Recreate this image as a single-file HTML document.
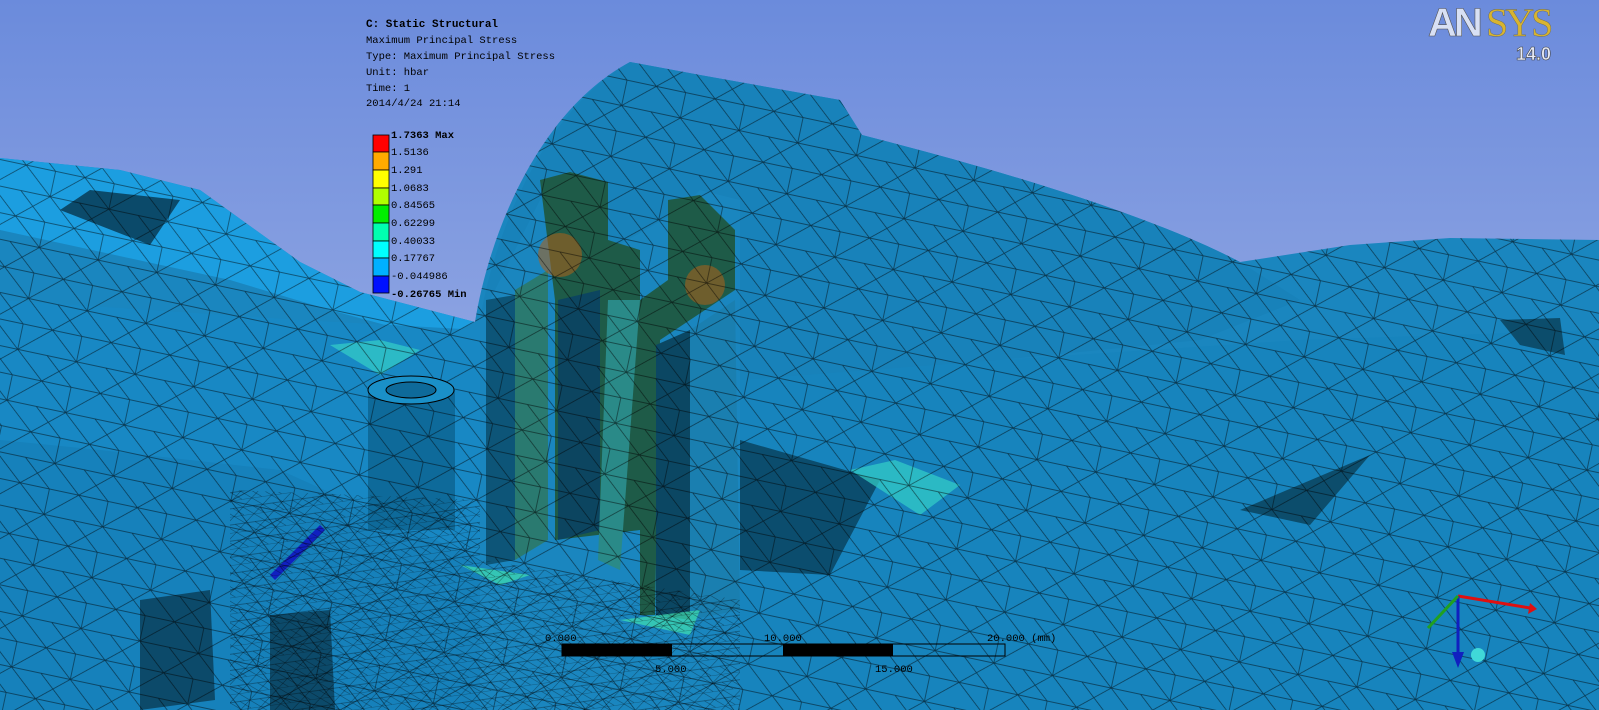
<!DOCTYPE html>
<html><head><meta charset="utf-8"><style>
body{margin:0;width:1599px;height:710px;overflow:hidden;background:#000}
svg{display:block}
.t{font-family:"Liberation Mono",monospace;font-size:10.5px;fill:#000}
</style></head><body>
<svg width="1599" height="710" viewBox="0 0 1599 710" xmlns="http://www.w3.org/2000/svg">
<defs>
<linearGradient id="sky" x1="0" y1="0" x2="0" y2="1">
<stop offset="0" stop-color="#6b8bdc"/><stop offset="1" stop-color="#b0bde8"/></linearGradient>
<pattern id="mesh" width="60" height="52" patternUnits="userSpaceOnUse" patternTransform="rotate(12)">
<path d="M0 0H60M0 26H60M0 52H60M0 0L30 26L0 52M60 0L30 26L60 52M30 0V26M0 26L30 52" stroke="#000" stroke-width="0.7" fill="none" opacity="0.6"/></pattern>
<pattern id="fine" width="20" height="16" patternUnits="userSpaceOnUse" patternTransform="rotate(-8)">
<path d="M0 0H20M0 8H20M0 0L10 8L20 0M0 16L10 8L20 16M0 8L10 16" stroke="#000" stroke-width="0.5" fill="none" opacity="0.6"/></pattern>
<clipPath id="cp"><path d="M0 158L120 170L200 190L300 262L360 292L475 322C490 230 540 110 630 62L700 75L840 100L862 135C1000 170 1150 215 1240 262L1350 245L1450 238L1599 240V710H0Z"/></clipPath>
<clipPath id="floor"><path d="M230 490L480 500L480 560L740 600L740 710H230Z"/></clipPath>
</defs>
<rect width="1599" height="710" fill="url(#sky)"/>
<path d="M0 158L120 170L200 190L300 262L360 292L475 322C490 230 540 110 630 62L700 75L840 100L862 135C1000 170 1150 215 1240 262L1350 245L1450 238L1599 240V710H0Z" fill="#1a86bf"/>
<path d="M0 158L120 170L200 190L300 262L360 292L475 322L440 340L330 310L230 280L0 230Z" fill="#1c9ee0"/>
<path d="M480 320C495 230 545 110 630 62L700 75L840 100L862 135C1000 170 1150 215 1240 262L1300 300L1200 340L1000 360L800 380L740 390L740 200L700 190L680 210L610 250L600 180L570 175L540 200Z" fill="#1882ba"/>
<path d="M0 300L300 320L480 330L480 700H0Z" fill="#1888c4"/>
<path d="M0 440L100 450L280 470L480 560L480 710H0Z" fill="#1681bb"/>
<path d="M60 210L90 190L180 200L150 245Z" fill="#0b4a6a"/>
<path d="M740 380L1000 360L1300 340L1599 330V710H740Z" fill="#1784bd"/>
<path d="M740 440L880 480L830 575L740 570Z" fill="#0b4d6e"/>
<path d="M1240 510L1370 455L1310 525Z" fill="#0c4d6c"/>
<path d="M368 390L455 390L455 530L368 530Z" fill="#0e6a9a"/>
<path d="M486 300L515 295L515 560L486 565Z" fill="#0d5578"/>
<path d="M515 290L548 270L548 540L515 560Z" fill="#2a7a70"/>
<path d="M540 180L570 172L608 182L608 240L640 250L640 530L555 540L555 300Z" fill="#1e5b48"/>
<path d="M558 300L600 290L600 530L558 540Z" fill="#0c4560"/>
<path d="M668 200L700 195L735 230L735 290L660 340L655 615L640 615L640 300L668 280Z" fill="#1e5b48"/>
<path d="M656 345L690 330L690 620L656 615Z" fill="#0b4763"/>
<path d="M690 330L735 300L740 610L690 620Z" fill="#1a7fb0"/>
<path d="M608 300L640 300L620 570L598 560Z" fill="#2a8a88"/>
<circle cx="560" cy="255" r="22" fill="#b06018" opacity="0.55"/>
<circle cx="705" cy="285" r="20" fill="#b06018" opacity="0.55"/>
<path d="M330 345L380 340L420 350L380 375Z" fill="#35d0c8" opacity="0.7"/>
<path d="M850 470L895 460L960 485L920 515Z" fill="#35d0c8" opacity="0.7"/>
<path d="M460 565L530 575L500 585Z" fill="#40e0b0" opacity="0.7"/>
<path d="M620 620L700 610L690 635Z" fill="#40e0b0" opacity="0.7"/>
<path d="M270 575L320 525L325 530L275 580Z" fill="#1020c0"/>
<path d="M140 600L210 590L215 700L140 710Z" fill="#0c4a6a"/>
<path d="M270 615L330 610L335 710L270 710Z" fill="#0c4a6a"/>
<path d="M1500 320L1560 318L1565 355L1520 345Z" fill="#0c4d6c"/>
<rect width="1599" height="710" fill="url(#mesh)" clip-path="url(#cp)"/>
<rect x="230" y="490" width="520" height="220" fill="url(#fine)" clip-path="url(#floor)"/>
<ellipse cx="411" cy="390" rx="43" ry="14" fill="#1a90c8" stroke="#000"/>
<ellipse cx="411" cy="390" rx="25" ry="8" fill="#0e6a9a" stroke="#000"/>
<rect x="562" y="644" width="443" height="12" fill="none" stroke="#000" stroke-width="1"/>
<rect x="562" y="644" width="110" height="12" fill="#000"/>
<rect x="783" y="644" width="110" height="12" fill="#000"/>
<text class="t" x="545" y="641">0.000</text><text class="t" x="764" y="641">10.000</text><text class="t" x="987" y="641">20.000 (mm)</text>
<text class="t" x="655" y="672">5.000</text><text class="t" x="875" y="672">15.000</text>
<line x1="1458" y1="596" x2="1530" y2="608" stroke="#e01010" stroke-width="3"/>
<path d="M1530 603L1537 609L1528 614Z" fill="#e01010"/>
<line x1="1458" y1="596" x2="1458" y2="655" stroke="#1020c0" stroke-width="3"/>
<path d="M1452 652L1458 668L1464 652Z" fill="#1020c0"/>
<line x1="1458" y1="596" x2="1428" y2="628" stroke="#20a020" stroke-width="3"/>
<circle cx="1478" cy="655" r="7" fill="#40d8d8"/>
<text class="t" x="366" y="27" style="font-weight:bold;font-size:11px">C: Static Structural</text>
<text class="t" x="366" y="43">Maximum Principal Stress</text>
<text class="t" x="366" y="59">Type: Maximum Principal Stress</text>
<text class="t" x="366" y="75">Unit: hbar</text>
<text class="t" x="366" y="91">Time: 1</text>
<text class="t" x="366" y="106">2014/4/24 21:14</text>
<g stroke="#000" stroke-width="0.8">
<rect x="373" y="135" width="16" height="17" fill="#ff0000"/>
<rect x="373" y="152" width="16" height="18" fill="#ffaa00"/>
<rect x="373" y="170" width="16" height="18" fill="#ffff00"/>
<rect x="373" y="188" width="16" height="17" fill="#b0ff00"/>
<rect x="373" y="205" width="16" height="18" fill="#00ee00"/>
<rect x="373" y="223" width="16" height="18" fill="#00ffb0"/>
<rect x="373" y="241" width="16" height="17" fill="#00ffff"/>
<rect x="373" y="258" width="16" height="18" fill="#00b0ff"/>
<rect x="373" y="276" width="16" height="17" fill="#0010ff"/>
</g>
<text class="t" x="391" y="138" style="font-weight:bold">1.7363 Max</text>
<text class="t" x="391" y="155">1.5136</text><text class="t" x="391" y="173">1.291</text>
<text class="t" x="391" y="191">1.0683</text><text class="t" x="391" y="208">0.84565</text>
<text class="t" x="391" y="226">0.62299</text><text class="t" x="391" y="244">0.40033</text>
<text class="t" x="391" y="261">0.17767</text><text class="t" x="391" y="279">-0.044986</text>
<text class="t" x="391" y="297" style="font-weight:bold">-0.26765 Min</text>
<text x="1428" y="36" style="font-family:'Liberation Sans',sans-serif;font-weight:bold;font-size:40px;fill:#d8e0f4;stroke:#555;stroke-width:0.6;letter-spacing:-3px">AN</text>
<text x="1486" y="36" style="font-family:'Liberation Serif',serif;font-size:40px;fill:#d8b430;stroke:#665;stroke-width:0.4;letter-spacing:-3px">SYS</text>
<text x="1516" y="60" style="font-family:'Liberation Sans',sans-serif;font-weight:bold;font-size:18px;fill:#e8ecf8;stroke:#444;stroke-width:0.6">14.0</text>
</svg>
</body></html>
